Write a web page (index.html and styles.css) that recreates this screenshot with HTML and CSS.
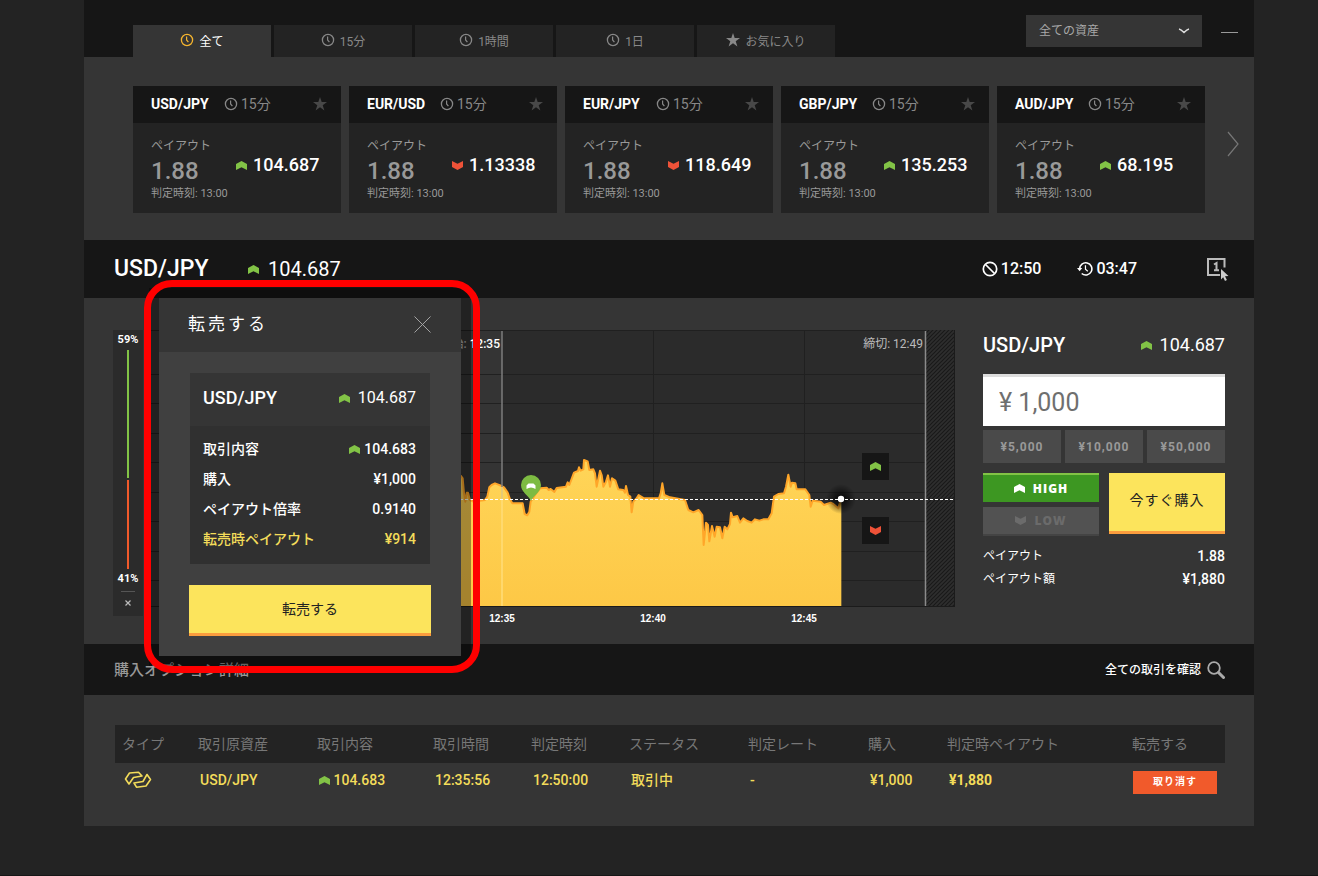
FILE: index.html
```html
<!DOCTYPE html>
<html lang="ja">
<head>
<meta charset="utf-8">
<title>USD/JPY</title>
<link rel="stylesheet" href="styles.css">
</head>
<body>
<svg class="defs" aria-hidden="true">
  <symbol id="clock" viewBox="0 0 14 14"><circle cx="7" cy="7" r="5.6" fill="none" stroke="currentColor" stroke-width="1.3"/><path d="M6.6 3.4V7l1.8 2.2" fill="none" stroke="currentColor" stroke-width="1.2"/></symbol>
  <symbol id="star" viewBox="0 0 14 14"><path d="M7 0l1.7 5H14L9.7 8.200l1.700 5.300L7 10.300l-4.400 3.200 1.700-5.300L0 5h5.300z" fill="currentColor"/></symbol>
  <symbol id="up" viewBox="0 0 11 9"><path d="M0 3L5.500 0 11 3v6L5.500 6.300 0 9z" fill="currentColor"/></symbol>
  <symbol id="down" viewBox="0 0 11 9"><path d="M0 0l5.500 2.700L11 0v6L5.500 9 0 6z" fill="currentColor"/></symbol>
</svg>
<main class="app">
  <header class="topbar">
    <nav class="tabs">
      <button class="tab tab-active"><svg class="i-clock"><use href="#clock"/></svg>全て</button>
      <button class="tab"><svg class="i-clock"><use href="#clock"/></svg>15分</button>
      <button class="tab"><svg class="i-clock"><use href="#clock"/></svg>1時間</button>
      <button class="tab"><svg class="i-clock"><use href="#clock"/></svg>1日</button>
      <button class="tab"><svg class="i-clock"><use href="#star"/></svg>お気に入り</button>
    </nav>
    <div class="filter">
      <select class="asset-select" aria-label="資産"><option>全ての資産</option></select>
      <svg class="select-arrow" viewBox="0 0 12 6"><path d="M1 1q2 .5 5 3.500Q9 1.500 11 1" fill="none" stroke="#ddd" stroke-width="1.500"/></svg>
    </div>
    <button class="collapse" aria-label="最小化"><svg viewBox="0 0 17 2"><path d="M0 1.500h17" stroke="#999"/></svg></button>
  </header>

  <section class="cards">
    <article class="card">
      <div class="card-head"><b class="pair">USD/JPY</b><svg class="i-clock"><use href="#clock"/></svg><span class="term">15分</span><svg class="fav"><use href="#star"/></svg></div>
      <div class="card-body"><div><p class="label">ペイアウト</p><p class="rate">1.88</p><p class="time">判定時刻: 13:00</p></div><p class="price"><svg class="arrow up"><use href="#up"/></svg>104.687</p></div>
    </article>
    <article class="card">
      <div class="card-head"><b class="pair">EUR/USD</b><svg class="i-clock"><use href="#clock"/></svg><span class="term">15分</span><svg class="fav"><use href="#star"/></svg></div>
      <div class="card-body"><div><p class="label">ペイアウト</p><p class="rate">1.88</p><p class="time">判定時刻: 13:00</p></div><p class="price"><svg class="arrow down"><use href="#down"/></svg>1.13338</p></div>
    </article>
    <article class="card">
      <div class="card-head"><b class="pair">EUR/JPY</b><svg class="i-clock"><use href="#clock"/></svg><span class="term">15分</span><svg class="fav"><use href="#star"/></svg></div>
      <div class="card-body"><div><p class="label">ペイアウト</p><p class="rate">1.88</p><p class="time">判定時刻: 13:00</p></div><p class="price"><svg class="arrow down"><use href="#down"/></svg>118.649</p></div>
    </article>
    <article class="card">
      <div class="card-head"><b class="pair">GBP/JPY</b><svg class="i-clock"><use href="#clock"/></svg><span class="term">15分</span><svg class="fav"><use href="#star"/></svg></div>
      <div class="card-body"><div><p class="label">ペイアウト</p><p class="rate">1.88</p><p class="time">判定時刻: 13:00</p></div><p class="price"><svg class="arrow up"><use href="#up"/></svg>135.253</p></div>
    </article>
    <article class="card">
      <div class="card-head"><b class="pair">AUD/JPY</b><svg class="i-clock"><use href="#clock"/></svg><span class="term">15分</span><svg class="fav"><use href="#star"/></svg></div>
      <div class="card-body"><div><p class="label">ペイアウト</p><p class="rate">1.88</p><p class="time">判定時刻: 13:00</p></div><p class="price"><svg class="arrow up"><use href="#up"/></svg>68.195</p></div>
    </article>
    <button class="next" aria-label="次へ"><svg viewBox="0 0 12 26"><path d="M1 1l10 12L1 25" fill="none" stroke="#777" stroke-width="1.200"/></svg></button>
  </section>

  <section class="trade-head">
    <h1 class="trade-pair">USD/JPY</h1>
    <span class="trade-price"><svg class="arrow up"><use href="#up"/></svg>104.687</span>
    <span class="stat"><svg viewBox="0 0 16 16"><circle cx="8" cy="8" r="6.700" fill="none" stroke="currentColor" stroke-width="1.700"/><path d="M3.500 3.500l9 9" stroke="currentColor" stroke-width="1.700"/></svg>12:50</span>
    <span class="stat"><svg viewBox="0 0 17 16"><path d="M2.800 8A6.500 6.500 0 1 1 5 12.800" fill="none" stroke="currentColor" stroke-width="1.700"/><path d="M9 4v4.300l2.500 2" fill="none" stroke="currentColor" stroke-width="1.300"/><path d="M0 7h5.600L2.800 10.500z" fill="currentColor"/></svg>03:47</span>
    <button class="one-click" aria-label="ワンクリック"><svg viewBox="0 0 22 24"><path d="M17.500 10.500V2H1v16h12" fill="none" stroke="#bbb" stroke-width="2"/><path d="M7 7.500l2.500-1.500v7.500M7 13.200h5" fill="none" stroke="#bbb" stroke-width="2"/><path d="M14 12l7.500 7-3.500.3 1.900 3.700-1.900 1-1.800-3.700L14 22.500z" fill="#ccc"/></svg></button>
  </section>

  <section class="trade">
    <aside class="sentiment">
      <span>59%</span>
      <i class="bar bar-up"></i>
      <i class="bar bar-down"></i>
      <span>41%</span>
      <hr class="bar-line">
      <button class="bar-close" aria-label="閉じる"><svg viewBox="0 0 6 6"><path d="M.5.5l5 5m0-5l-5 5" stroke="#bbb" stroke-width="1.200"/></svg></button>
    </aside>

    <div class="chart">
      <svg class="plot" viewBox="0 0 810 277" preserveAspectRatio="none">
        <defs>
          <linearGradient id="fill" x1="0" y1="0" x2="0" y2="1"><stop offset="0" stop-color="#ffd558"/><stop offset="1" stop-color="#fdc846"/></linearGradient>
          <pattern id="hatch" width="4" height="4" patternUnits="userSpaceOnUse"><path d="M-1 1l2-2M0 4l4-4M3 5l2-2" stroke="#181818" stroke-width="1.200"/></pattern>
          <radialGradient id="glow"><stop offset="0" stop-color="#000" stop-opacity=".9"/><stop offset="1" stop-color="#000" stop-opacity="0"/></radialGradient>
        </defs>
        <rect width="810" height="277" fill="#2b2b2b"/>
        <rect width="357" height="277" fill="#343434"/>
        <g fill="none" stroke="#202020">
          <path d="M0 .5h810M0 44.500h781M0 73.500h781M0 103.500h781M0 132.500h781M0 162.500h781M0 191.500h781M0 221.500h781M0 250.500h781M508.500 0v277M659.500 0v277"/>
        </g>
        <rect x="781" width="29" height="277" fill="#2e2e2e"/>
        <rect x="781" width="29" height="277" fill="url(#hatch)"/>
        <path d="M809.500 0v277M0 276.500h810" stroke="#1b1b1b"/>
        <g transform="translate(295 -10) scale(.33333)">
          <path fill="url(#fill)" d="M40 858L50 480 63 468 68 475 72 520 76 545 80 518 84 518 90 540 100 545 135 540 142 530 148 502 155 495 165 490 173 493 185 498 192 502 203 518 210 538 217 550 248 550 254 582 262 586 268 575 272 545 285 525 300 505 320 503 326 510 332 507 343 516 350 504 378 500 383 487 388 495 402 458 414 453 417 442 422 452 430 448 432 420 443 424 448 450 460 448 465 460 470 500 480 452 485 465 490 500 498 485 504 466 510 500 516 475 526 482 535 508 550 510 555 518 558 498 564 525 571 530 575 577 580 545 590 535 596 525 612 535 657 535 662 520 667 490 673 525 690 532 735 540 745 570 760 577 776 570 787 585 791 675 798 608 804 615 808 664 816 618 824 650 830 620 840 622 847 655 854 620 862 628 870 612 873 578 878 592 892 588 900 608 910 595 922 603 935 608 945 598 958 602 970 598 985 598 995 580 1002 530 1015 522 1032 520 1038 500 1045 464 1052 500 1056 488 1066 490 1070 508 1096 508 1108 525 1112 560 1118 542 1142 545 1152 555 1172 548 1180 552 1195 565 1202 540 1204 538V858z"/>
          <path fill="none" stroke="#ffa629" stroke-width="6" stroke-linejoin="round" d="M50 480L63 468 68 475 72 520 76 545 80 518 84 518 90 540 100 545 135 540 142 530 148 502 155 495 165 490 173 493 185 498 192 502 203 518 210 538 217 550 248 550 254 582 262 586 268 575 272 545 285 525 300 505 320 503 326 510 332 507 343 516 350 504 378 500 383 487 388 495 402 458 414 453 417 442 422 452 430 448 432 420 443 424 448 450 460 448 465 460 470 500 480 452 485 465 490 500 498 485 504 466 510 500 516 475 526 482 535 508 550 510 555 518 558 498 564 525 571 530 575 577 580 545 590 535 596 525 612 535 657 535 662 520 667 490 673 525 690 532 735 540 745 570 760 577 776 570 787 585 791 675 798 608 804 615 808 664 816 618 824 650 830 620 840 622 847 655 854 620 862 628 870 612 873 578 878 592 892 588 900 608 910 595 922 603 935 608 945 598 958 602 970 598 985 598 995 580 1002 530 1015 522 1032 520 1038 500 1045 464 1052 500 1056 488 1066 490 1070 508 1096 508 1108 525 1112 560 1118 542 1142 545 1152 555 1172 548 1180 552 1195 565 1202 540"/>
        </g>
        <path d="M357 1v168" stroke="#7c7c7c" stroke-width="1.500"/>
        <path d="M357 157v119" stroke="#ffdc78" stroke-width="1.500"/>
        <path d="M780.500 1v275" stroke="#8a8a8a" stroke-width="1.500"/>
        <circle cx="696" cy="169" r="15" fill="url(#glow)"/>
        <path d="M300 169.500h510" stroke="#fff" stroke-dasharray="3 2"/>
        <circle cx="696" cy="169" r="3.200" fill="#fff"/>
        <path d="M386 171c-1.500-5-10-8.500-10-16a10 10 0 0 1 20 0c0 7.500-8.500 11-10 16z" fill="#7dbb42"/>
        <path d="M381.500 155.500l2-2h5l2 2v3.500q-4.500-3-9 0z" fill="#fff"/>
      </svg>
      <p class="mark mark-start"><span class="mark-word">開始:</span> 12:35</p>
      <p class="mark mark-end">締切: 12:49</p>
      <button class="pick pick-up" aria-label="HIGH"><svg class="arrow up"><use href="#up"/></svg></button>
      <button class="pick pick-down" aria-label="LOW"><svg class="arrow down"><use href="#down"/></svg></button>
      <div class="axis"><span>12:35</span><span>12:40</span><span>12:45</span></div>
    </div>

    <form class="order">
      <div class="order-head"><h2 class="order-pair">USD/JPY</h2><span class="order-price"><svg class="arrow up"><use href="#up"/></svg>104.687</span></div>
      <input class="amount" type="text" value="¥ 1,000" aria-label="購入金額">
      <div class="presets"><button type="button">¥5,000</button><button type="button">¥10,000</button><button type="button">¥50,000</button></div>
      <div class="actions">
        <div class="sides">
          <button type="button" class="side side-high"><svg class="arrow"><use href="#up"/></svg>HIGH</button>
          <button type="button" class="side side-low"><svg class="arrow"><use href="#down"/></svg>LOW</button>
        </div>
        <button type="button" class="buy">今すぐ購入</button>
      </div>
      <p class="sum"><span>ペイアウト</span><span>1.88</span></p>
      <p class="sum"><span>ペイアウト額</span><span>¥1,880</span></p>
    </form>

    <div class="modal" role="dialog" aria-labelledby="modal-title">
      <div class="modal-head"><h2 id="modal-title" class="modal-title">転売する</h2><button class="modal-close" aria-label="閉じる"><svg viewBox="0 0 18 18"><path d="M.5.5l17 17m0-17l-17 17" stroke="#aaa"/></svg></button></div>
      <div class="modal-body">
        <div class="ticket">
          <div class="ticket-head"><h3 class="ticket-pair">USD/JPY</h3><span class="ticket-price"><svg class="arrow up"><use href="#up"/></svg>104.687</span></div>
          <div class="ticket-rows">
            <p class="row"><span>取引内容</span><span class="row-value"><svg class="arrow up"><use href="#up"/></svg>104.683</span></p>
            <p class="row"><span>購入</span><span>¥1,000</span></p>
            <p class="row"><span>ペイアウト倍率</span><span>0.9140</span></p>
            <p class="row row-hot"><span>転売時ペイアウト</span><span>¥914</span></p>
          </div>
        </div>
        <button class="sell">転売する</button>
      </div>
      <div class="highlight"></div>
    </div>
  </section>

  <section class="details-head">
    <h2 class="details-title">購入オプション詳細</h2>
    <a class="all-trades" href="#">全ての取引を確認<svg viewBox="0 0 18 18"><circle cx="7" cy="7" r="5.800" fill="none" stroke="#aaa" stroke-width="1.800"/><path d="M11.500 11.500l5 5" stroke="#aaa" stroke-width="3" stroke-linecap="round"/></svg></a>
  </section>

  <section class="details">
    <table class="trades">
      <colgroup><col class="c76"><col class="c119"><col class="c116"><col class="c98"><col class="c98"><col class="c119"><col class="c120"><col class="c79"><col class="c185"><col class="c100"></colgroup>
      <thead><tr><th>タイプ</th><th>取引原資産</th><th>取引内容</th><th>取引時間</th><th>判定時刻</th><th>ステータス</th><th>判定レート</th><th>購入</th><th>判定時ペイアウト</th><th>転売する</th></tr></thead>
      <tbody><tr>
        <td><svg class="type-icon" viewBox="0 0 28 18"><path d="M5 13L1.500 8 5.500 2 14.500 1.200 18 5 9.500 6.500zM23 3.500L26.500 8.500 22 15 12.500 16.200 10 12 19 10.500z" fill="none" stroke="currentColor" stroke-width="1.600" stroke-linejoin="round"/></svg></td>
        <td>USD/JPY</td><td><svg class="arrow up"><use href="#up"/></svg> 104.683</td><td>12:35:56</td><td>12:50:00</td><td>取引中</td><td>-</td><td>¥1,000</td><td><b>¥1,880</b></td>
        <td class="cell-action"><button class="cancel">取り消す</button></td>
      </tr></tbody>
    </table>
  </section>
</main>
</body>
</html>
```

FILE: styles.css
```css
* { box-sizing: border-box; }
body {
  margin: 0;
  min-height: 100vh;
  background: #232323;
  border-bottom: 1px solid #161616;
  color: #fff;
  font: 14px/20px Roboto, "Noto Sans CJK JP", sans-serif;
}
h1, h2, h3, p { margin: 0; font-weight: 500; }
button, input, select { font: inherit; color: inherit; border: 0; padding: 0; border-radius: 0; background: none; }
button { cursor: pointer; }
svg { display: block; flex: none; }
.defs { position: absolute; width: 0; height: 0; }
.i-clock { width: 14px; height: 14px; }
.arrow { width: 11px; height: 9px; }
.up { color: #82c346; }
.down { color: #ee5238; }

.app { margin: 0 64px 0 84px; min-width: 1080px; background: #353535; }

.topbar { display: flex; align-items: flex-start; height: 57px; padding: 0 16px 0 49px; background: #161616; }
.tabs { display: flex; gap: 3px; margin: 25px auto 0 0; }
.tab { display: flex; align-items: center; justify-content: center; gap: 5px; width: 138px; height: 32px; padding-top: 1px; background: #232323; color: #888; font-size: 12px; }
.tab .i-clock { margin-bottom: 3px; }
.tab-active { background: #353535; color: #fff; }
.tab-active .i-clock { color: #f6b52e; }
.filter { position: relative; margin-top: 15px; }
.asset-select { appearance: none; width: 176px; height: 32px; padding: 0 13px; background: #353535; color: #a8a8a8; font-size: 12px; }
.select-arrow { position: absolute; right: 12px; top: 13px; width: 12px; height: 6px; pointer-events: none; }
.collapse { margin: 31px 0 0 19px; }
.collapse svg { width: 17px; height: 2px; }

.cards { display: flex; gap: 8px; padding: 29px 15px 27px 49px; }
.card { flex: 1; background: #232323; }
.card-head { display: flex; align-items: center; height: 37px; padding: 0 14px 1px 18px; background: #161616; color: #888; }
.pair { width: 73px; color: #fff; font-weight: 700; }
.term { margin-left: 3px; }
.fav { width: 14px; height: 14px; margin-left: auto; color: #484848; }
.card-body { display: flex; padding: 13px 12px 11px 18px; color: #999; }
.card-body > div { width: 85px; flex: none; white-space: nowrap; }
.label { font-size: 12px; line-height: 20px; font-weight: 400; }
.rate { font-size: 24px; line-height: 30px; }
.time { font-size: 11px; line-height: 16px; font-weight: 400; }
.price { display: flex; align-items: center; gap: 6px; height: 20px; margin-top: 19px; color: #fff; font-size: 18px; }
.next { margin-left: 14px; padding-bottom: 12px; }
.next svg { width: 12px; height: 26px; }

.trade-head { display: flex; align-items: center; height: 58px; padding: 0 25px 0 30px; background: #161616; }
.trade-pair { width: 134px; font-size: 23px; line-height: 28px; }
.trade-price { display: flex; align-items: center; gap: 9px; margin-right: auto; font-size: 20px; }
.stat { display: flex; align-items: center; gap: 3px; margin-right: 36px; font-size: 16px; font-weight: 500; }
.stat svg { width: 16px; height: 16px; }
.one-click { margin-left: 34px; }
.one-click svg { width: 22px; height: 24px; }

.trade { position: relative; display: flex; height: 346px; padding: 32px 29px 28px; }
.sentiment { display: flex; flex-direction: column; align-items: center; width: 30px; height: 286px; margin-right: 2px; background: #2b2b2b; font-size: 11px; font-weight: 700; }
.bar { width: 2px; }
.bar-up { flex: 59; background: #82c346; margin-bottom: 2px; }
.bar-down { flex: 41; background: #f15a2b; }
.bar-line { width: 14px; margin: 2px 0 8px; border: 0; border-top: 1px solid #555; }
.bar-close { margin-bottom: 10px; }
.bar-close svg { width: 6px; height: 6px; }

.chart { position: relative; flex: 1; min-width: 0; }
.plot { width: 100%; height: 277px; }
.mark { position: absolute; top: 4px; font-size: 12px; font-weight: 400; color: #bbb; }
.mark-start { right: 455px; color: #fff; font-weight: 500; }
.mark-word { color: #aaa; }
.mark-end { right: 32px; }
.pick { position: absolute; right: 66px; display: grid; place-items: center; width: 27px; height: 27px; background: #161616; }
.pick-up { top: 123px; }
.pick-down { top: 187px; }
.axis { display: flex; justify-content: flex-end; gap: 111px; padding-right: 131px; font: 700 10px/24px "Liberation Sans", sans-serif; }
.axis span { width: 40px; text-align: center; }

.order { width: 242px; margin-left: 28px; }
.order-head { display: flex; align-items: center; justify-content: space-between; height: 30px; margin-bottom: 14px; }
.order-pair { font-size: 20px; }
.order-price { display: flex; align-items: center; gap: 8px; font-size: 18px; }
.amount { display: block; width: 100%; height: 52px; padding: 2px 16px 0; border-top: 3px solid #ddd; background: #fff; color: #6f6f6f; font-size: 25px; }
.presets { display: grid; grid-template-columns: repeat(3, 1fr); gap: 4px; margin: 4px 0 10px; }
.presets button { height: 33px; background: #4a4a4a; color: #999; font: 700 12px/20px Roboto, sans-serif; letter-spacing: 1px; }
.actions { display: grid; grid-template-columns: 1fr 1fr; gap: 10px; margin-bottom: 9px; align-items: start; }
.sides { display: grid; gap: 5px; }
.side { display: flex; align-items: center; justify-content: center; gap: 8px; height: 29px; font: 800 12px/20px "Open Sans", sans-serif; letter-spacing: 1px; }
.side-high { background: #3d9722; border-top: 2px solid #82c346; }
.side-low { background: #525252; border-bottom: 2px solid #444; color: #6b6b6b; }
.buy { height: 61px; padding-bottom: 4px; background: #fce45c; border-bottom: 3px solid #fb9d3e; color: #222; font-size: 14px; letter-spacing: 1px; }
.sum { display: flex; justify-content: space-between; line-height: 23px; }
.sum span:first-child { font-size: 12px; font-weight: 400; }

.modal { position: absolute; z-index: 2; left: 75px; top: 0; width: 302px; background: #404040; box-shadow: 0 0 0 10px rgba(0, 0, 0, .35); }
.modal-head { display: flex; align-items: center; justify-content: space-between; height: 54px; padding: 0 30px 2px 29px; background: #353535; }
.modal-title { font-size: 17px; font-weight: 400; letter-spacing: 3px; }
.modal-close svg { width: 17px; height: 17px; }
.modal-body { padding: 21px 30px 20px; }
.ticket { background: #303030; margin: 0 1px 21px; }
.ticket-head { display: flex; align-items: center; justify-content: space-between; height: 53px; padding: 0 14px 3px 13px; background: #353535; }
.ticket-pair { font-size: 18px; }
.ticket-price { display: flex; align-items: center; gap: 8px; font-size: 16px; }
.ticket-rows { padding: 8px 14px 10px 13px; }
.row { display: flex; justify-content: space-between; line-height: 30px; }
.row-value { display: flex; align-items: center; gap: 4px; }
.row-hot { color: #f3dc5a; }
.sell { display: block; width: 100%; height: 51px; background: #fce45c; border-bottom: 3px solid #fb9d3e; color: #222; }
.highlight { position: absolute; inset: -18px -19px -17px -15px; border: 7px solid #f00; border-radius: 28px; pointer-events: none; }

.details-head { display: flex; align-items: center; justify-content: space-between; height: 51px; padding: 0 29px 0 30px; background: #161616; }
.details-title { font-size: 15px; color: #999; }
.all-trades { display: flex; align-items: center; gap: 6px; color: #fff; font-size: 12px; font-weight: 500; text-decoration: none; }
.all-trades svg { width: 18px; height: 18px; }
.details { padding: 30px 29px 29px 31px; }
.trades { width: 100%; table-layout: fixed; border-collapse: collapse; text-align: left; white-space: nowrap; }
.trades th { height: 38px; padding: 0 0 0 7px; background: #232323; color: #777; font-weight: 400; }
.trades td { height: 34px; padding: 0 0 0 9px; color: #f3dc5a; font-weight: 500; }
.trades td .arrow { display: inline-block; }
.type-icon { width: 28px; height: 18px; }
.trades .cell-action { padding: 4px 8px 0; }
.cancel { display: block; width: 100%; height: 23px; background: #f15a2b; color: #fff; font-size: 10px; font-weight: 700; line-height: 16px; letter-spacing: 1px; }
.c76 { width: 76px; }
.c79 { width: 79px; }
.c98 { width: 98px; }
.c100 { width: 100px; }
.c116 { width: 116px; }
.c119 { width: 119px; }
.c120 { width: 120px; }
.c185 { width: 185px; }
```
